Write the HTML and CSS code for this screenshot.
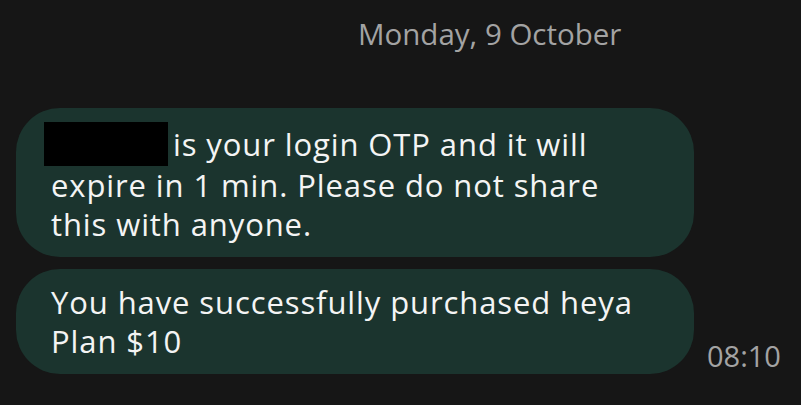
FILE: index.html
```html
<!DOCTYPE html>
<html>
  <head>
    <meta name="viewport" content="width=device-width, initial-scale=1">
    <link rel="stylesheet" href="styles.css">
  </head>
  <body>
    <div class="date">Monday, 9 October</div>
    <div class="thread">
      <div class="row">
        <div class="bubble"><span class="redact"></span>is your login OTP and it will expire in 1 min. Please do not share this with anyone.</div>
      </div>
      <div class="row">
        <div class="bubble">You have successfully purchased heya Plan $10</div>
        <div class="time">08:10</div>
      </div>
    </div>
  </body>
</html>
```

FILE: styles.css
```css
body { margin: 0; background-color: #161616; color: #f4f4f4; font-family: "Open Sans", sans-serif }
.date { height: 108px; padding-left: 358px; padding-top: 13px; box-sizing: border-box; font-size: 29.5px; color: #a3a3a3 }
.thread { display: flex; flex-direction: column; gap: 12px; padding-left: 16px }
.row { display: flex; align-items: flex-end; gap: 13px }
.bubble { width: 678px; box-sizing: border-box; padding: 14px 58px 13px 35px; background-color: #1b342e; border-radius: 44px; font-size: 31px; line-height: 39px; letter-spacing: 0.9px }
.redact { display: inline-block; width: 124px; height: 44px; margin-left: -7px; margin-right: 5px; background-color: #000; vertical-align: -10px }
.time { padding-bottom: 4px; font-size: 29px; line-height: 29px; color: #a3a3a3 }
```
